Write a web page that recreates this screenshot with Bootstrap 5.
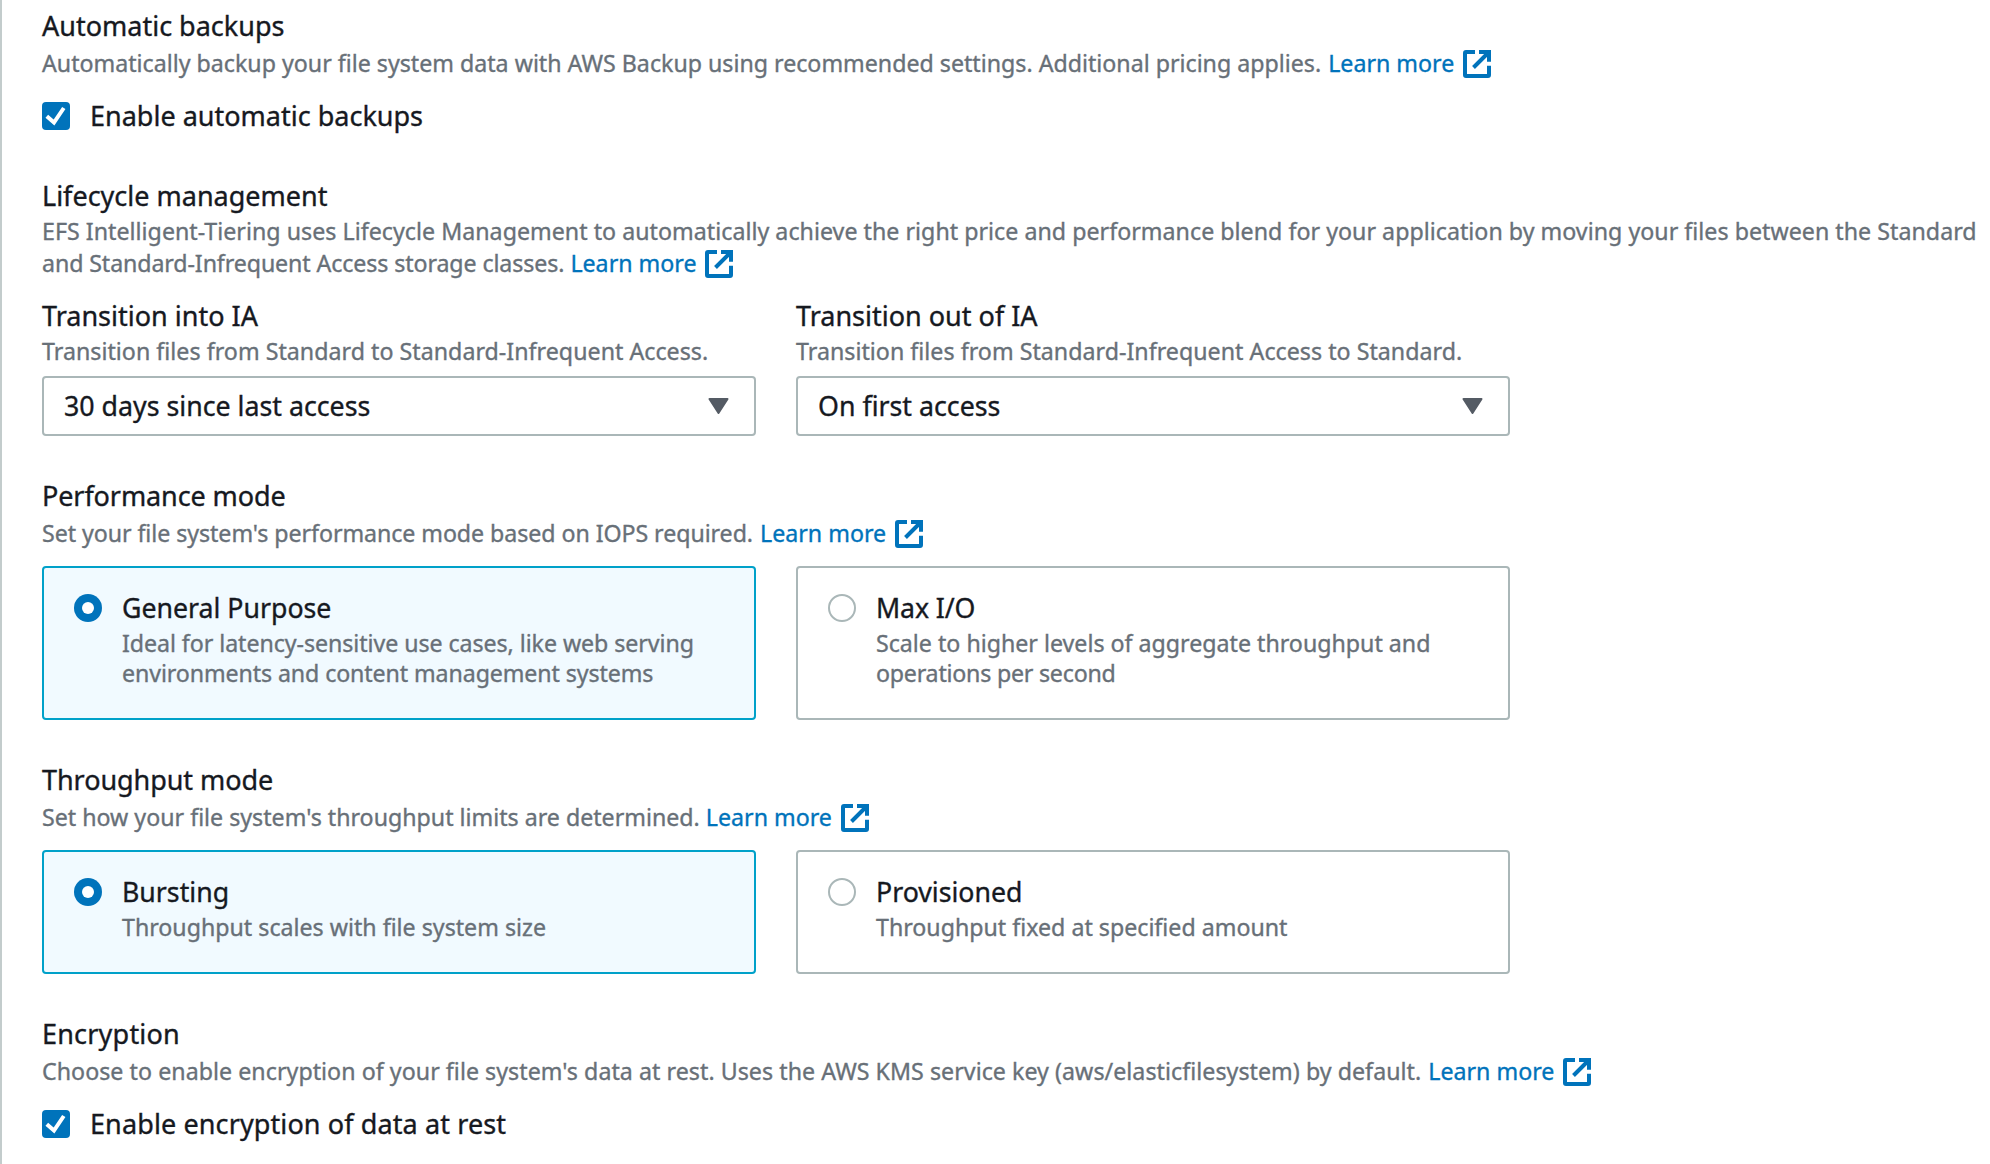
<!DOCTYPE html>
<html lang="en">
<head>
<meta charset="utf-8">
<meta name="viewport" content="width=device-width, initial-scale=1">
<title>File system settings</title>
<link rel="stylesheet" href="https://cdn.jsdelivr.net/npm/bootstrap@5.3.0/dist/css/bootstrap.min.css">
<style>
  body { font-family: "Noto Sans", "Open Sans", sans-serif; color: #16191f; background: #fff; overflow: hidden; -webkit-text-stroke: .35px currentColor; }
  .panel { min-height: 1164px; border-left: 2px solid #c3cccc; padding: 8px 0 0 40px; }
  .block { margin-bottom: 42px; }
  .block-first { margin-bottom: 44px; }
  .heading { font-size: 27px; line-height: 36px; font-weight: 400; margin: 0; white-space: nowrap; }
  .hint { font-size: 23.2px; line-height: 32px; color: #687078; margin: 0; white-space: nowrap; }
  .hint a { color: #0073bb; text-decoration: none; margin-left: 1px; }
  .snug { letter-spacing: -.1px; }
  .slight { letter-spacing: -.06px; }
  .snugger { letter-spacing: -.22px; }
  .loose { letter-spacing: .045px; }
  .wider { letter-spacing: .03px; }
  .gap-3px { margin-top: 3px; }
  .gap-1px { margin-top: 1px; }
  .ext { width: 28px; height: 28px; margin: -4px 0 -4px 9px; vertical-align: -2px; }
  .check-row { gap: 20px; margin-top: 19px; }
  .tick { width: 28px; height: 28px; }
  .pair { display: grid; grid-template-columns: 714px 714px; column-gap: 40px; }
  .tiles { margin-top: 17px; }
  .picker { height: 60px; margin-top: 9px; padding: 0 25px 0 20px; border: 2px solid #aab7b8; border-radius: 4px; background: #fff; color: inherit; font-size: 26.75px; line-height: 36px; }
  .picker svg { width: 21px; height: 16px; }
  .tile { border: 2px solid #aab7b8; border-radius: 4px; padding: 22px 30px 30px; gap: 20px; }
  .tile.chosen { border-color: #00a1c9; background: #f1faff; }
  .tile .heading { font-size: 26.7px; }
  .tile .hint { line-height: 30px; margin-top: 2px; }
  .dot { width: 28px; height: 28px; margin-top: 4px; }
</style>
</head>
<body>
<svg class="d-none" xmlns="http://www.w3.org/2000/svg">
  <symbol id="ext" viewBox="0 0 28 28">
    <path d="M12 2H3a1 1 0 0 0-1 1v22a1 1 0 0 0 1 1h22a1 1 0 0 0 1-1v-9.300M16 2h10v9.700M25.500 2.500 10.500 17.500" fill="none" stroke="#0073bb" stroke-width="4"/>
  </symbol>
  <symbol id="tick" viewBox="0 0 28 28">
    <rect width="28" height="28" rx="4" fill="#0073bb"/>
    <path d="M4.800 14.200 12 20.600 21.800 6" fill="none" stroke="#fff" stroke-width="4"/>
  </symbol>
  <symbol id="dot-on" viewBox="0 0 28 28">
    <circle cx="14" cy="14" r="14" fill="#0073bb"/><circle cx="14" cy="14" r="6" fill="#fff"/>
  </symbol>
  <symbol id="dot-off" viewBox="0 0 28 28">
    <circle cx="14" cy="14" r="13" fill="#fff" stroke="#aab7b8" stroke-width="2"/>
  </symbol>
  <symbol id="caret" viewBox="0 0 21 16">
    <path d="M1.500 1h18L10.500 15z" fill="#545b64" stroke="#545b64" stroke-width="2" stroke-linejoin="round"/>
  </symbol>
</svg>

<main class="panel">
  <section class="block-first">
    <h2 class="heading">Automatic backups</h2>
    <p class="hint gap-3px">Automatically backup your file system data with AWS Backup using recommended settings. Additional pricing applies. <a href="#">Learn more<svg class="ext"><use href="#ext"/></svg></a></p>
    <label class="check-row d-flex align-items-center"><svg class="tick"><use href="#tick"/></svg><span class="heading">Enable automatic backups</span></label>
  </section>

  <section class="block">
    <h2 class="heading">Lifecycle management</h2>
    <p class="hint gap-1px"><span class="wider">EFS Intelligent-Tiering uses Lifecycle Management to automatically achieve the right price and performance blend for your application by moving your files between the Standard</span><br><span class="snug">and Standard-Infrequent Access storage classes.</span> <a class="ms-0" href="#">Learn more<svg class="ext"><use href="#ext"/></svg></a></p>
    <div class="pair check-row">
      <div>
        <h3 class="heading">Transition into IA</h3>
        <p class="hint wider gap-1px">Transition files from Standard to Standard-Infrequent Access.</p>
        <button type="button" class="picker w-100 d-flex align-items-center justify-content-between">30 days since last access<svg><use href="#caret"/></svg></button>
      </div>
      <div>
        <h3 class="heading">Transition out of IA</h3>
        <p class="hint wider gap-1px">Transition files from Standard-Infrequent Access to Standard.</p>
        <button type="button" class="picker w-100 d-flex align-items-center justify-content-between">On first access<svg><use href="#caret"/></svg></button>
      </div>
    </div>
  </section>

  <section class="block">
    <h2 class="heading snug">Performance mode</h2>
    <p class="hint gap-3px"><span class="slight">Set your file system's performance mode based on IOPS required.</span> <a href="#">Learn more<svg class="ext"><use href="#ext"/></svg></a></p>
    <div class="pair tiles">
      <div class="tile chosen d-flex align-items-start">
        <svg class="dot flex-shrink-0"><use href="#dot-on"/></svg>
        <div><h3 class="heading">General Purpose</h3><p class="hint"><span class="slight">Ideal for latency-sensitive use cases, like web serving</span><br><span class="snug">environments and content management systems</span></p></div>
      </div>
      <div class="tile d-flex align-items-start">
        <svg class="dot flex-shrink-0"><use href="#dot-off"/></svg>
        <div><h3 class="heading snug">Max I/O</h3><p class="hint">Scale to higher levels of aggregate throughput and<br><span class="snugger">operations per second</span></p></div>
      </div>
    </div>
  </section>

  <section class="block">
    <h2 class="heading slight">Throughput mode</h2>
    <p class="hint gap-3px">Set how your file system's throughput limits are determined. <a class="ms-0" href="#">Learn more<svg class="ext"><use href="#ext"/></svg></a></p>
    <div class="pair tiles">
      <div class="tile chosen d-flex align-items-start">
        <svg class="dot flex-shrink-0"><use href="#dot-on"/></svg>
        <div><h3 class="heading">Bursting</h3><p class="hint">Throughput scales with file system size</p></div>
      </div>
      <div class="tile d-flex align-items-start">
        <svg class="dot flex-shrink-0"><use href="#dot-off"/></svg>
        <div><h3 class="heading">Provisioned</h3><p class="hint">Throughput fixed at specified amount</p></div>
      </div>
    </div>
  </section>

  <section>
    <h2 class="heading" style="letter-spacing:.2px">Encryption</h2>
    <p class="hint gap-3px"><span class="loose">Choose to enable encryption of your file system's data at rest. Uses the AWS KMS service key (aws/elasticfilesystem) by default.</span> <a href="#">Learn more<svg class="ext"><use href="#ext"/></svg></a></p>
    <label class="check-row d-flex align-items-center"><svg class="tick"><use href="#tick"/></svg><span class="heading" style="letter-spacing:.11px">Enable encryption of data at rest</span></label>
  </section>
</main>
<script src="https://cdn.jsdelivr.net/npm/bootstrap@5.3.0/dist/js/bootstrap.bundle.min.js"></script>
</body>
</html>
